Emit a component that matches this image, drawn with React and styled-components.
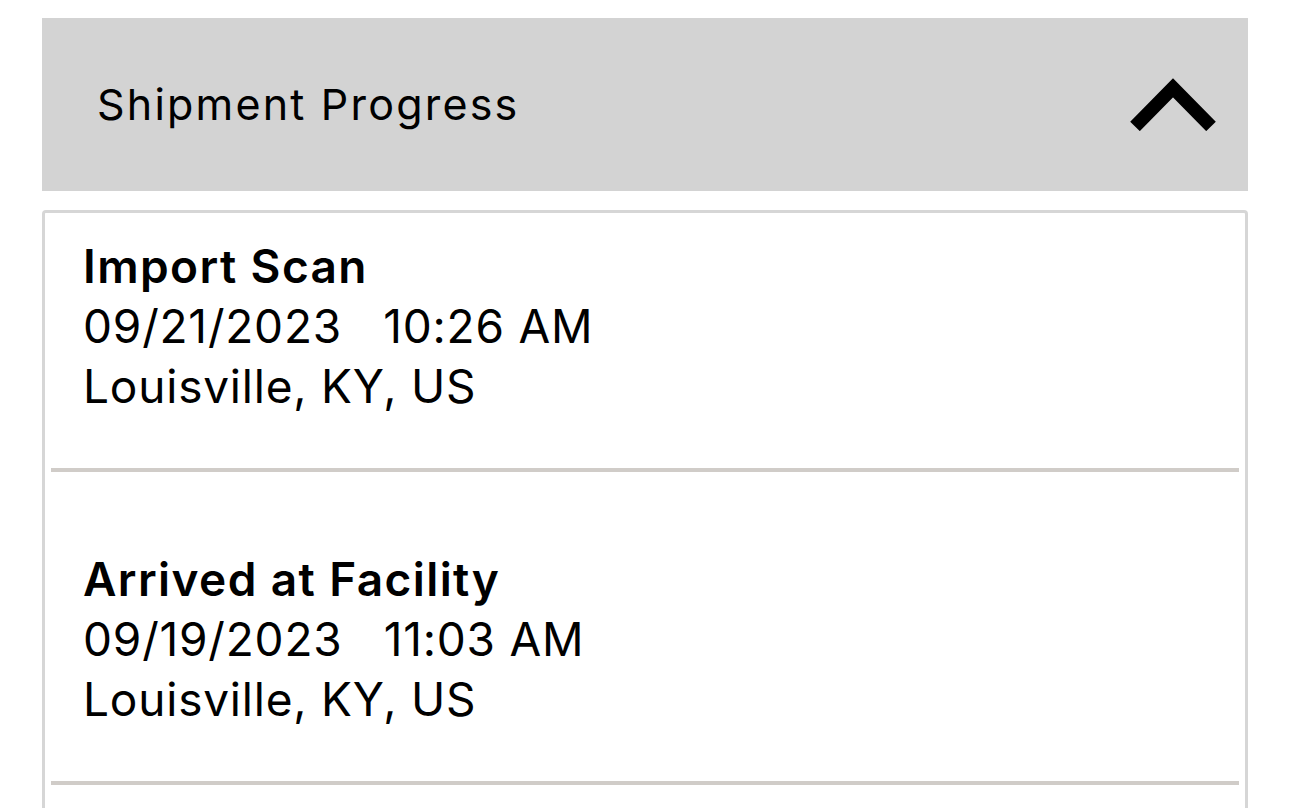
import React from "react";
import styled, { createGlobalStyle } from "styled-components";

const Global = createGlobalStyle`
  body {
    margin: 0;
    background: #ffffff;
    font-family: Inter, "Noto Sans", sans-serif;
    color: #000;
  }
`;

const Page = styled.div`
  padding: 18px 42px 0;
  display: flex;
  flex-direction: column;
  gap: 19px;
`;

const Header = styled.div`
  height: 173px;
  background: #d3d3d3;
  display: flex;
  align-items: center;
  justify-content: space-between;
  padding: 0 32px 0 55px;
`;

const HeaderTitle = styled.h2`
  margin: 0;
  font-size: 43px;
  font-weight: 400;
  letter-spacing: 2.2px;
  margin-top: -2px;
`;

const Card = styled.div`
  border: 3px solid #d6d6d6;
  border-bottom: none;
  border-radius: 4px 4px 0 0;
  padding: 0 6px 40px;
`;

const Row = styled.div`
  padding: ${(p) => (p.$first ? "23px" : "77px")} 32px 52px;
  border-bottom: 4px solid #d0ccc8;
  font-size: 46px;
  line-height: 60px;
`;

const EventName = styled.div`
  font-weight: 600;
  font-size: 46px;
  letter-spacing: 1.4px;
`;

const Line = styled.div`
  font-weight: 400;
  white-space: pre;
  letter-spacing: 0.8px;
`;

function Chevron() {
  return (
    <svg width="86" height="53" viewBox="0 0 86 53">
      <polyline
        points="5,48.4 43,9.8 81,48.4"
        fill="none"
        stroke="#000"
        strokeWidth="13.5"
        strokeLinejoin="miter"
        strokeLinecap="butt"
      />
    </svg>
  );
}

const events = [
  { name: "Import Scan", date: "09/21/2023", time: "10:26 AM", place: "Louisville, KY, US" },
  { name: "Arrived at Facility", date: "09/19/2023", time: "11:03 AM", place: "Louisville, KY, US" },
];

export default function App() {
  return (
    <Page>
      <Global />
      <Header>
        <HeaderTitle>Shipment Progress</HeaderTitle>
        <Chevron />
      </Header>
      <Card>
        {events.map((e, i) => (
          <Row key={i} $first={i === 0}>
            <EventName>{e.name}</EventName>
            <Line>{e.date + "   " + e.time}</Line>
            <Line>{e.place}</Line>
          </Row>
        ))}
      </Card>
    </Page>
  );
}
